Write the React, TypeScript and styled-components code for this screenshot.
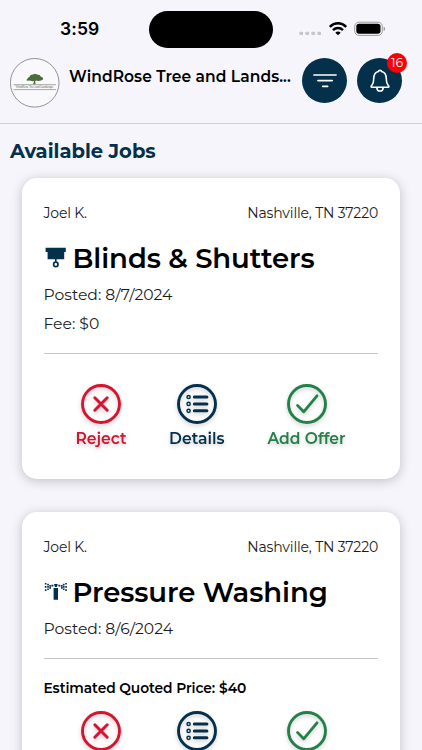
import React from "react";
import styled, { createGlobalStyle } from "styled-components";

const NAVY = "#04304b";
const RED = "#d9132f";
const GREEN = "#238049";

const GlobalStyle = createGlobalStyle`
  * { box-sizing: border-box; }
  html, body { margin: 0; background: #f5f5fb; overflow: hidden; }
  body { font-family: Montserrat, Inter, "Liberation Sans", sans-serif; color: #000; }
`;

const Screen = styled.div`
  width: 422px;
  height: 750px;
  overflow: hidden;
  background: #f5f5fb;
`;

const StatusBar = styled.div`
  height: 50px;
  display: grid;
  grid-template-columns: 149px 124px 1fr;
  padding-top: 11px;
`;

const Clock = styled.div`
  padding-left: 60px;
  font: 600 17.5px/36px Inter, sans-serif;
  letter-spacing: 0.1px;
`;

const Island = styled.div`
  height: 37px;
  border-radius: 19px;
  background: #000;
`;

const StatusIcons = styled.div`
  display: flex;
  align-items: center;
  height: 36px;
  padding-left: 26px;
`;

const WifiSvg = styled.svg`
  margin-left: 7px;
`;

const BatterySvg = styled.svg`
  margin-left: 6px;
`;

const Header = styled.header`
  height: 74px;
  display: flex;
  padding: 8px 20px 0 10px;
  border-bottom: 1.5px solid #cdced3;
`;

const Avatar = styled.div`
  width: 50px;
  height: 50px;
  flex: none;
`;

const Company = styled.div`
  width: 232px;
  padding-left: 9px;
  font-size: 15.5px;
  font-weight: 600;
  line-height: 37px;
  letter-spacing: 0.07px;
  white-space: nowrap;
`;

const HeaderButtons = styled.div`
  display: flex;
  gap: 10px;
  padding-left: 10px;
`;

const RoundButton = styled.button`
  position: relative;
  width: 45px;
  height: 45px;
  flex: none;
  display: grid;
  place-items: center;
  padding: 0;
  border: 0;
  border-radius: 50%;
  background: ${NAVY};
`;

const Badge = styled.span`
  position: absolute;
  top: -5px;
  right: -5px;
  width: 20px;
  height: 20px;
  border-radius: 50%;
  background: #fb0007;
  color: #fff;
  font: 400 12.5px/20px Montserrat, Inter, sans-serif;
  text-align: center;
`;

const SectionTitle = styled.h1`
  margin: 0;
  height: 54px;
  padding: 12px 0 0 10px;
  color: ${NAVY};
  font-size: 19.5px;
  font-weight: 700;
  line-height: 30px;
`;

const JobList = styled.main`
  display: flex;
  flex-direction: column;
  gap: 33px;
  padding: 0 22px;
`;

const Card = styled.article`
  flex: none;
  padding: 25px 22px 30px 21.5px;
  border-radius: 15px;
  background: #fff;
  box-shadow: 0 2px 12px rgba(0, 0, 0, 0.22);
`;

const Meta = styled.div`
  display: flex;
  justify-content: space-between;
  color: #1c1c1c;
  font-size: 14px;
  line-height: 20px;
  letter-spacing: -0.17px;
`;

const JobTitle = styled.h2`
  display: flex;
  gap: 4px;
  margin: 17px 0 4px;
  font-size: 27.5px;
  font-weight: 600;
  line-height: 36px;
  letter-spacing: -0.08px;
  white-space: nowrap;
  svg { margin-top: 6px; flex: none; }
`;

const Line = styled.div`
  color: #1c1c1c;
  font-size: 15.6px;
  line-height: 29px;
`;

const Divider = styled.hr`
  height: 1px;
  margin: 15px 0 0;
  border: 0;
  background: #c6c6c8;
`;

const Estimate = styled.div`
  margin: 19px 0 -17px;
  font-size: 13.8px;
  font-weight: 600;
  line-height: 20px;
  letter-spacing: -0.07px;
`;

const Actions = styled.div`
  display: flex;
  justify-content: space-between;
  margin-top: 30px;
  padding: 0 32px;
`;

const Action = styled.button<{ $color: string; $width: number }>`
  display: flex;
  flex-direction: column;
  align-items: center;
  gap: 5px;
  width: ${(p) => p.$width}px;
  padding: 0;
  border: 0;
  background: none;
  color: ${(p) => p.$color};
  font-family: inherit;
  font-size: 15.6px;
  font-weight: 600;
  line-height: 20px;
  white-space: nowrap;
  filter: drop-shadow(0 2px 2px rgba(0, 0, 0, 0.2));
`;

const SignalDots = () => (
  <svg width="22" height="20" viewBox="0 0 22 20" fill="#c5c5ca">
    {[0, 6, 12, 18].map((x) => <rect key={x} x={x + 0.3} y="12.7" width="3.8" height="3.4" rx="1" />)}
  </svg>
);

const Wifi = () => (
  <WifiSvg width="20" height="16" viewBox="0 0 20 16" fill="none" stroke="#000" strokeWidth="2.5">
    <path d="M1.8 5.8C6.5 1.2 13.5 1.2 18.2 5.8" />
    <path d="M5 9.1C7.8 6.4 12.2 6.4 15 9.1" />
    <path d="M10 14.3L7.3 11.7C8.8 10.2 11.2 10.2 12.7 11.7Z" fill="#000" stroke="none" />
  </WifiSvg>
);

const Battery = () => (
  <BatterySvg width="32" height="16" viewBox="0 0 32 16">
    <rect x="0.7" y="1.2" width="27.6" height="13.2" rx="4.2" fill="none" stroke="#9b9ba0" />
    <rect x="2.3" y="2.8" width="24.2" height="10" rx="2.7" />
    <path d="M29.6 5.7c2 .7 2 3.6 0 4.3z" fill="#9b9ba0" />
  </BatterySvg>
);

const Logo = () => (
  <svg width="50" height="50" viewBox="0 0 50 50">
    <circle cx="24.7" cy="24.8" r="24.3" fill="#f9f9fc" stroke="#777a7d" strokeWidth="0.8" />
    <path d="M23.2 26.5l.8-3.5-2.8-2h7l-3 2 .3 3.5z" fill="#665744" />
    <path d="M16.5 22l1.6-2.3 1.2-.7 1.3-1.9 2.4-.5 2-.9 2.2.9 2.4.4 1 1.4 2 1 .7 1.9-2.2 1.1-3 .7-2.8-.9-2.8 1-3-.6-2.5.2z" fill="#496c3a" />
    <path d="M3.5 26.7h42.5M3.5 31.6h42.5" stroke="#80877e" strokeWidth="0.7" />
    <text x="5.5" y="30.4" fontFamily="Liberation Serif" fontSize="3.6" fill="#6d726a" textLength="38">WindRose Tree and Landscape</text>
  </svg>
);

const FilterIcon = () => (
  <svg width="26" height="20" viewBox="0 0 26 20" fill="none" stroke="#fff" strokeWidth="1.6" strokeLinecap="round">
    <path d="M1.9 4h22.2M5.9 9.6h14.4M10.7 15.4h5" />
  </svg>
);

const BellIcon = () => (
  <svg width="22" height="26" viewBox="0 0 22 26" fill="none" stroke="#fff" strokeWidth="1.6" strokeLinejoin="round" strokeLinecap="round">
    <path d="M9.3 3.6c.3-1.7 3.1-1.7 3.4 0 3.3.9 4.5 3.3 4.6 7 .1 4.2.7 5.8 2.3 7.2.6.7.4 1.5-.5 1.5H2.9c-.9 0-1.1-.8-.5-1.5 1.6-1.4 2.2-3 2.3-7.2.1-3.7 1.3-6.1 4.6-7z" />
    <path d="M7.8 19.6c.3 4.6 6.1 4.6 6.4 0" />
  </svg>
);

const BlindsIcon = () => (
  <svg width="25" height="24" viewBox="0 0 25 24" fill={NAVY}>
    <path d="M1.6 1.8h20.2v4.3h-1.6v7.2h-7.6v2.4H11v-2.4H3.6V6.1h-2z" />
    <circle cx="11.8" cy="18.4" r="2.2" fill="none" stroke={NAVY} strokeWidth="1.7" />
  </svg>
);

const WasherIcon = () => (
  <svg width="25" height="24" viewBox="0 0 25 24" fill={NAVY}>
    <path d="M9.6 8h4.4v11.8H9.6zM10 4h3.8l-.9 2.9h-2zM7.4 4.8h2v1.8h-2zM14.4 4.8h2v1.8h-2z" />
    {[[.8, 2.9], [.8, 6], [.8, 9.2], [3.2, 3.7], [3.2, 6], [3.2, 8.4], [5.3, 5], [5.3, 7], [17, 5], [17, 7], [18.9, 3.7], [18.9, 6], [18.9, 8.4], [21.2, 2.9], [21.2, 6], [21.2, 9.2]].map(([x, y]) => (
      <rect key={`${x}-${y}`} x={x} y={y} width="1.7" height="1.7" rx=".3" />
    ))}
  </svg>
);

const Ring = ({ children }: { children: React.ReactNode }) => (
  <svg width="40" height="40" viewBox="0 0 40 40" fill="none" stroke="currentColor" strokeWidth="3" strokeLinecap="round" strokeLinejoin="round">
    <circle cx="20" cy="20" r="18.5" strokeWidth="2.9" />
    {children}
  </svg>
);

const JobActions = () => (
  <Actions>
    <Action $color={RED} $width={51}>
      <Ring><path d="M13.8 13.8l12.4 12.4M26.2 13.8L13.8 26.2" /></Ring>
      Reject
    </Action>
    <Action $color={NAVY} $width={56}>
      <Ring>
        <path d="M17.3 13h12.6M17.3 19.9h12.6M17.3 26.8h12.6" />
        <g strokeWidth="1.5">
          <circle cx="11.6" cy="13" r="1.6" />
          <circle cx="11.6" cy="19.9" r="1.6" />
          <circle cx="11.6" cy="26.8" r="1.6" />
        </g>
      </Ring>
      Details
    </Action>
    <Action $color={GREEN} $width={79}>
      <Ring><path d="M10.5 21.4l6.2 6.4 13.3-16" strokeWidth="2.8" /></Ring>
      Add Offer
    </Action>
  </Actions>
);

type Job = { title: string; icon: React.ReactNode; lines: string[]; estimate?: string };

const jobs: Job[] = [
  { title: "Blinds & Shutters", icon: <BlindsIcon />, lines: ["Posted: 8/7/2024", "Fee: $0"] },
  { title: "Pressure Washing", icon: <WasherIcon />, lines: ["Posted: 8/6/2024"], estimate: "Estimated Quoted Price: $40" },
];

export default function App() {
  return (
    <Screen>
      <GlobalStyle />
      <StatusBar>
        <Clock>3:59</Clock>
        <Island />
        <StatusIcons><SignalDots /><Wifi /><Battery /></StatusIcons>
      </StatusBar>
      <Header>
        <Avatar><Logo /></Avatar>
        <Company>WindRose Tree and Lands...</Company>
        <HeaderButtons>
          <RoundButton aria-label="Filter"><FilterIcon /></RoundButton>
          <RoundButton aria-label="Notifications"><BellIcon /><Badge>16</Badge></RoundButton>
        </HeaderButtons>
      </Header>
      <SectionTitle>Available Jobs</SectionTitle>
      <JobList>
        {jobs.map((job) => (
          <Card key={job.title}>
            <Meta><span>Joel K.</span><span>Nashville, TN 37220</span></Meta>
            <JobTitle>{job.icon}{job.title}</JobTitle>
            {job.lines.map((line) => <Line key={line}>{line}</Line>)}
            <Divider />
            {job.estimate && <Estimate>{job.estimate}</Estimate>}
            <JobActions />
          </Card>
        ))}
      </JobList>
    </Screen>
  );
}
